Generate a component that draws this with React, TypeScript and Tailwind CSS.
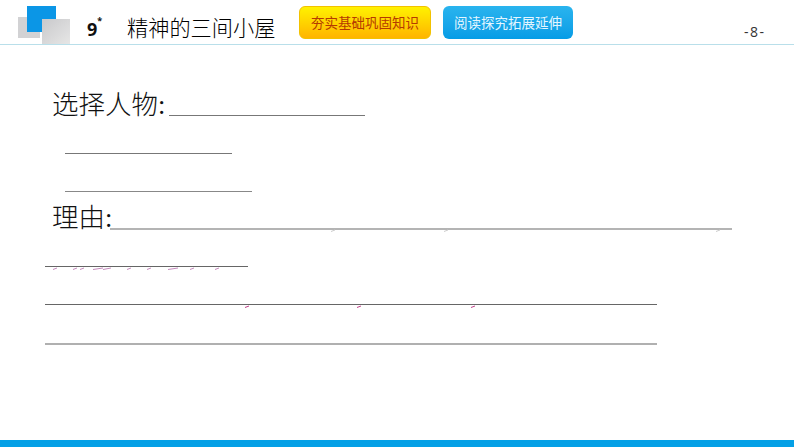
const CJK = "font-['Liberation_Serif','Noto_Sans_CJK_SC',serif]";

function Logo() {
  return (
    <svg width="54" height="40" viewBox="0 0 54 40" className="shrink-0">
      <defs>
        <linearGradient id="g" x1="0" y1="0" x2="1" y2="1">
          <stop offset="0" stopColor="#c9c9cb" />
          <stop offset="1" stopColor="#e6e6e6" />
        </linearGradient>
      </defs>
      <rect x="0" y="11" width="22" height="21" fill="#d2d2d4" />
      <rect x="9" y="0" width="29" height="26" fill="#0b96e6" />
      <rect x="24" y="13" width="28" height="25" fill="url(#g)" />
    </svg>
  );
}

// clipped remains of the answer text that pokes out under a line
function Tick({ left, color = "#c79ac0", w = 4 }: { left: number; color?: string; w?: number }) {
  return (
    <svg width={w} height="3" viewBox={`0 0 ${w} 3`} className="absolute top-px" style={{ left }}>
      <path d={`M0 2.5 L${w} 1`} stroke={color} strokeWidth="1" fill="none" />
    </svg>
  );
}

export default function App() {
  return (
    <div className="w-[794px] h-[447px] bg-white flex flex-col overflow-hidden">
      {/* Header */}
      <header className="h-[45px] shrink-0 flex items-start border-b border-[#b9dfea] pl-[18px] pt-[6px]">
        <Logo />
        <div className="ml-[15px] mt-[13px] w-[40px] font-['Open_Sans',sans-serif] font-bold text-[18px] leading-[20px] text-[#111]">
          9<sup className="text-[9px] font-bold align-top leading-[12px]">*</sup>
        </div>
        <div className="mt-[9px] w-[148px] font-['Noto_Sans_CJK_SC',sans-serif] font-light text-[21.2px] leading-[24px] text-black whitespace-nowrap">
          精神的三间小屋
        </div>
        <div className="ml-[24px] w-[132px] h-[33px] flex items-center justify-center rounded-[6px] border border-[#f2c200] bg-gradient-to-b from-[#fff200] to-[#ffb400] font-['Noto_Sans_CJK_SC',sans-serif] text-[13.5px] text-[#b53a00] whitespace-nowrap">
          夯实基础巩固知识
        </div>
        <div className="ml-[12px] w-[130px] h-[33px] flex items-center justify-center rounded-[6px] bg-gradient-to-b from-[#29b4ee] to-[#049ce6] font-['Noto_Sans_CJK_SC',sans-serif] text-[13.5px] text-[#e4f6ff] whitespace-nowrap">
          阅读探究拓展延伸
        </div>
        <div className="ml-[171px] mt-[17px] font-['Open_Sans',sans-serif] text-[14px] tracking-[1.5px] leading-[18px] text-[#333]">-8-</div>
      </header>

      {/* Body */}
      <main className="flex-1 flex flex-col">
        <div className="mt-[43px] ml-[52px] h-[30px] flex items-end">
          <span className={`${CJK} w-[117px] font-light text-[26.5px] leading-[30px] translate-y-[2px] text-[#111] whitespace-nowrap`}>选择人物:</span>
          <div className="mb-[2px] w-[196px] h-px bg-[#777]" />
        </div>
        <div className="mt-[35px] ml-[65px] w-[167px] h-px bg-[#777]" />
        <div className="mt-[37px] ml-[65px] w-[187px] h-px bg-[#888]" />
        <div className="mt-[9px] ml-[52px] h-[30px] flex items-end">
          <span className={`${CJK} w-[58px] font-light text-[26.5px] leading-[30px] translate-y-[2px] text-[#111] whitespace-nowrap`}>理由:</span>
          <div className="relative mb-px w-[622px] h-[2px] bg-[#b4b4b4]">
            <Tick left={221} color="#ccc" />
            <Tick left={334} color="#ccc" />
            <Tick left={606} color="#ccc" />
          </div>
        </div>
        <div className="relative mt-[35px] ml-[45px] w-[203px] h-px bg-[#666]">
          <Tick left={8} color="#c48abc" />
          <Tick left={28} color="#c48abc" />
          <Tick left={35} color="#c48abc" />
          <Tick left={48} color="#c48abc" w={10} />
          <Tick left={58} color="#c48abc" w={8} />
          <Tick left={82} color="#c48abc" />
          <Tick left={102} color="#c48abc" />
          <Tick left={123} color="#c48abc" w={10} />
          <Tick left={145} color="#c48abc" />
          <Tick left={170} color="#c48abc" />
        </div>
        <div className="relative mt-[37px] ml-[45px] w-[612px] h-px bg-[#666]">
          <Tick left={200} color="#c0428a" />
          <Tick left={312} color="#c0428a" />
          <Tick left={426} color="#c0428a" />
        </div>
        <div className="mt-[38px] ml-[45px] w-[612px] h-[2px] bg-[#b0b0b0]" />
      </main>

      {/* Bottom bar */}
      <footer className="h-[7px] shrink-0 bg-[#04a0e6]" />
    </div>
  );
}
